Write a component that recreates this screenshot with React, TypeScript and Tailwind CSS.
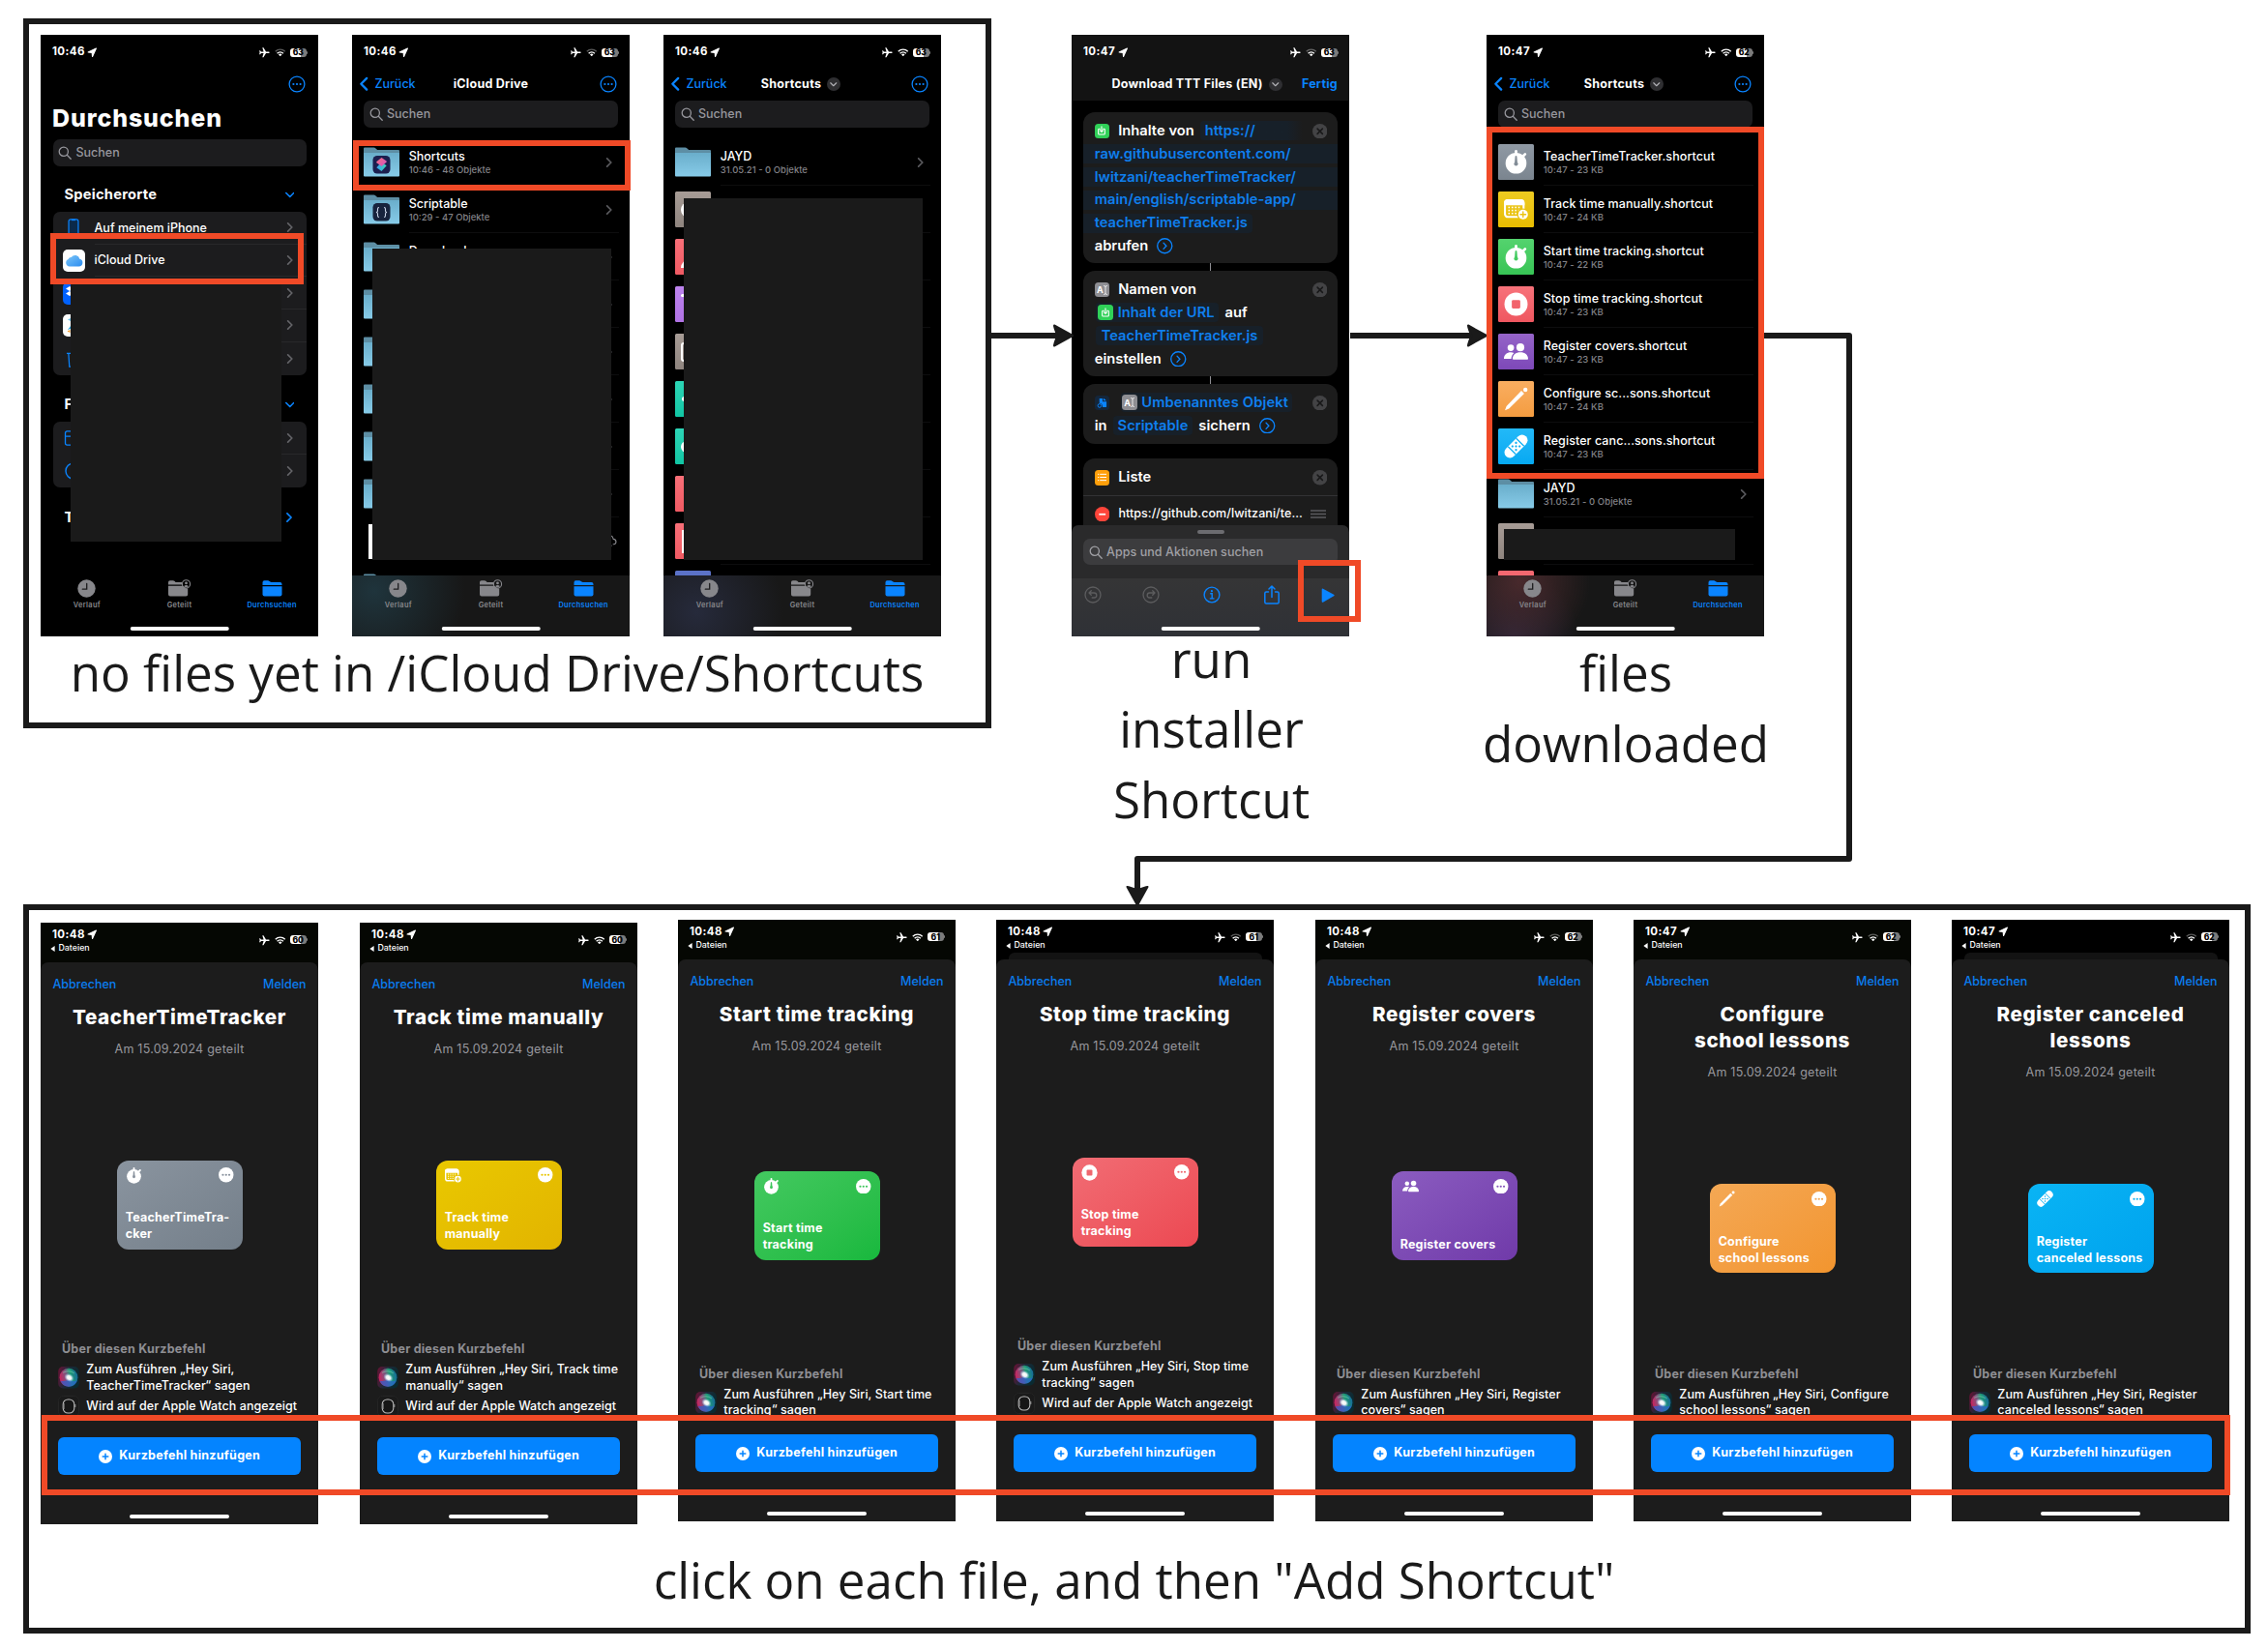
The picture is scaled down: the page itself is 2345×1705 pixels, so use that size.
import type { ReactNode } from "react";
import clsx from "clsx";

/* ---------- status bar ---------- */

function Wifi({ dim }: { dim: boolean }) {
  const outer = dim ? 0.35 : 1;
  return (
    <svg viewBox="0 0 22 16" className="h-[8.5px] w-[11.5px]" fill="none" stroke="#fff" strokeWidth="2.8">
      <path d="M1.5 6a13.4 13.4 0 0 1 19 0" opacity={outer} />
      <path d="M5 9.8a8.5 8.5 0 0 1 12 0" />
      <path d="M11 15.6 7.6 12.2a4.8 4.8 0 0 1 6.8 0z" fill="#fff" stroke="none" />
    </svg>
  );
}

function Battery({ level }: { level: number }) {
  return (
    <div className="flex items-center gap-[0.5px]">
      <div className="flex h-[9px] w-[16.5px] items-center justify-center rounded-[3px] bg-linear-to-r from-white from-63% to-[#7b7b7b] to-63% text-[8.5px] leading-none font-extrabold text-black">
        {level}
      </div>
      <div className="h-[3px] w-[1px] rounded-r-full bg-[#7b7b7b]" />
    </div>
  );
}

function LocationArrow() {
  return (
    <svg viewBox="0 0 24 24" className="h-[10.5px] w-[10.5px]" fill="#fff">
      <path d="M2.5 11.3 21.5 2.500l-8.800 19-.9-9.3z" stroke="#fff" strokeWidth="2.600" strokeLinejoin="round" />
    </svg>
  );
}

function StatusIcons({ level, dimWifi }: { level: number; dimWifi: boolean }) {
  return (
    <div className="flex items-center">
      <svg viewBox="0 0 24 24" className="mr-[5px] h-[12.5px] w-[12.5px] rotate-90" fill="#fff">
        <path d="M21.5 15.8v-2.3L13.5 8.600V3.400c0-.9-.7-1.800-1.500-1.800s-1.500.9-1.500 1.800v5.200l-8 4.900v2.300l8-2.500v5l-2.400 1.800v1.700L12 21l3.900.8v-1.700l-2.400-1.800v-5z" />
      </svg>
      <Wifi dim={dimWifi} />
      <div className="ml-[4.5px]">
        <Battery level={level} />
      </div>
    </div>
  );
}

function StatusBar({ time, level, dimWifi = false }: { time: string; level: number; dimWifi?: boolean }) {
  return (
    <div className="flex h-[35px] shrink-0 items-center justify-between pt-px pr-[11px] pl-[12px]">
      <div className="flex items-center gap-[2.5px] text-[11.5px] leading-none font-bold tracking-[0.035em]">
        {time}
        <LocationArrow />
      </div>
      <StatusIcons level={level} dimWifi={dimWifi} />
    </div>
  );
}

/* ---------- small shared icons ---------- */

function Chevron({ dir, className }: { dir: "right" | "left" | "down"; className: string }) {
  const d = { right: "M2 1l5 5-5 5", left: "M7 1 2 6l5 5", down: "M1 3l5 5 5-5" }[dir];
  return (
    <svg viewBox={dir === "down" ? "0 0 12 11" : "0 0 9 12"} className={className} fill="none" stroke="currentColor" strokeWidth="2" strokeLinecap="round" strokeLinejoin="round">
      <path d={d} />
    </svg>
  );
}

function MoreCircle() {
  return (
    <svg viewBox="0 0 18 18" className="h-[18px] w-[18px] text-[#0a84ff]">
      <circle cx="9" cy="9" r="7.9" fill="none" stroke="currentColor" strokeWidth="1.3" />
      <g fill="currentColor">
        <circle cx="5.4" cy="9" r="1.1" />
        <circle cx="9" cy="9" r="1.1" />
        <circle cx="12.6" cy="9" r="1.1" />
      </g>
    </svg>
  );
}

function TitleChevron() {
  return (
    <div className="flex h-[13.5px] w-[13.5px] items-center justify-center rounded-full bg-[#2f2f32] text-[#b0b0b5]">
      <Chevron dir="down" className="h-[6.5px] w-[7.5px]" />
    </div>
  );
}

function SearchField({ label, className }: { label: string; className: string }) {
  return (
    <div className={clsx("flex h-[27.3px] shrink-0 items-center gap-[4.5px] rounded-[7px] pl-[5.5px] text-[12.5px] leading-none font-medium", className)}>
      <svg viewBox="0 0 14 14" className="h-[14px] w-[14px]" fill="none" stroke="currentColor" strokeWidth="1.3" strokeLinecap="round">
        <circle cx="5.8" cy="5.8" r="4.6" />
        <path d="m9.3 9.3 3.9 3.9" />
      </svg>
      <span className="pt-px">{label}</span>
    </div>
  );
}

/* ---------- shortcut glyphs ---------- */

type Kind = "timer" | "calendar" | "stop" | "people" | "pencil" | "bandage";

function Glyph({ kind, cut, className }: { kind: Kind; cut: string; className: string }) {
  return (
    <svg viewBox="0 0 24 24" className={className} fill="#fff">
      {kind === "timer" && (
        <>
          <circle cx="12" cy="13.2" r="10.4" />
          <rect x="10.7" y="0" width="2.6" height="4" rx="1.2" />
          <path d="m19 6.2 2-2" stroke="#fff" strokeWidth="2.6" strokeLinecap="round" />
          <path d="M11.1 6.4q.9-1.2 1.8 0l.5 7h-2.8z" fill={cut} />
          <circle cx="12" cy="13.8" r="2" fill={cut} />
        </>
      )}
      {kind === "calendar" && (
        <>
          <rect x="1" y="3" width="18.5" height="16.5" rx="3" fill="none" stroke="#fff" strokeWidth="2" />
          <path d="M0 8V5.5Q0 2 3.5 2h13.5q3.5 0 3.5 3.5V8z" />
          <g fill="#fff">
            {[5, 8.3, 11.6, 14.9].map((x) =>
              [10, 13, 16].map((y) => <rect key={`${x}-${y}`} x={x - 0.7} y={y - 0.7} width="1.5" height="1.5" />),
            )}
          </g>
          <circle cx="19" cy="17" r="6" fill={cut} />
          <circle cx="19" cy="17" r="4.8" />
          <path d="M19 14.3v5.4M16.3 17h5.4" stroke={cut} strokeWidth="1.3" strokeLinecap="round" />
        </>
      )}
      {kind === "stop" && (
        <>
          <circle cx="12" cy="12" r="11.5" />
          <rect x="7.8" y="7.8" width="8.4" height="8.4" rx="1.3" fill={cut} />
        </>
      )}
      {kind === "people" && (
        <>
          <circle cx="6.8" cy="8.2" r="3.2" />
          <path d="M0 19.2c0-4 3-6.4 6.8-6.4 1.2 0 2.3.2 3.2.7-1.7 1.5-2.7 3.4-2.7 5.7z" />
          <circle cx="16.3" cy="7.8" r="3.9" />
          <path d="M8.600 19.200c0-3.800 3.200-6.400 7.700-6.400s7.700 2.600 7.700 6.400q0 .8-.8.8H9.400q-.8 0-.8-.8z" />
        </>
      )}
      {kind === "pencil" && (
        <>
          <path d="m17.3 3.9 2.8 2.8L5 21.5 1 23.2l1.500-4.100z" />
          <circle cx="21.3" cy="2.9" r="2.1" />
        </>
      )}
      {kind === "bandage" && (
        <g transform="rotate(-45 12 12)">
          <rect x="-2" y="6.5" width="28" height="11" rx="5.5" />
          <path d="M6.3 6.5v11M17.7 6.5v11" stroke={cut} strokeWidth="1.3" />
          <g fill={cut}>
            <circle cx="9.5" cy="9.5" r="1.1" />
            <circle cx="14.5" cy="9.5" r="1.1" />
            <circle cx="12" cy="12" r="1.1" />
            <circle cx="9.5" cy="14.5" r="1.1" />
            <circle cx="14.5" cy="14.5" r="1.1" />
          </g>
        </g>
      )}
    </svg>
  );
}

/* ---------- Files app ---------- */

function FolderIcon({ badge }: { badge?: "shortcuts" | "scriptable" }) {
  return (
    <svg viewBox="0 0 37 31" className="-mt-px h-[31px] w-[37px]">
      <defs>
        <linearGradient id="folderFront" x1="0" y1="0" x2="0" y2="1">
          <stop offset="0" stopColor="#6aaecb" />
          <stop offset="1" stopColor="#87cbe8" />
        </linearGradient>
        <linearGradient id="layersTop" x1="0" y1="0" x2="1" y2="1">
          <stop offset="0" stopColor="#f2717f" />
          <stop offset="1" stopColor="#d452c4" />
        </linearGradient>
        <linearGradient id="layersBottom" x1="0" y1="0" x2="1" y2="0">
          <stop offset="0" stopColor="#39a0ee" />
          <stop offset="1" stopColor="#3fd6b4" />
        </linearGradient>
      </defs>
      <path d="M0 1.5Q0 .5 1 .5h9.500q1 0 1.700.7l1.400 1.300q.5.500 1.400.500H36q1 0 1 1V12H0z" fill="#5d8ea4" />
      <path d="M0 6h37v23.500q0 1-1 1H1q-1 0-1-1z" fill="url(#folderFront)" />
      {badge && <rect x="9.5" y="9" width="18" height="18.5" rx="4.5" fill={badge === "shortcuts" ? "#1c1f4f" : "#17233d"} />}
      {badge === "shortcuts" && (
        <>
          <path d="m18.5 15.5 5.200 3.700-5.200 5.800-5.200-3.700z" fill="url(#layersBottom)" />
          <path d="m18.500 11 5 3.500q.7.600 0 1.300l-5 4.200-5-3.700q-.7-.6 0-1.300z" fill="url(#layersTop)" />
        </>
      )}
      {badge === "scriptable" && (
        <g fill="none" stroke="#c9d3e6" strokeWidth="1.1">
          <path d="M16 13.500q-1.500 0-1.500 1.500v2q0 1.300-1.500 1.500 1.500.2 1.500 1.500v2q0 1.500 1.500 1.500M21 13.500q1.500 0 1.500 1.500v2q0 1.300 1.500 1.500-1.500.2-1.500 1.500v2q0 1.500-1.500 1.500" />
        </g>
      )}
    </svg>
  );
}

function FileRow({ icon, name = "", meta = "", chevron = false }: { icon: ReactNode; name?: string; meta?: string; chevron?: boolean }) {
  return (
    <div className="flex h-[49px] shrink-0">
      <div className="flex h-[49px] w-[37px] items-center justify-center">{icon}</div>
      <div className="ml-[9.7px] flex grow border-b border-[#0d0d0e]">
        <div className="grow pt-[11px]">
          <div className="text-[12.5px] leading-[15px] font-medium whitespace-nowrap">{name}</div>
          <div className="text-[9.5px] leading-[13px] font-medium whitespace-nowrap text-[#828287]">{meta}</div>
        </div>
        {chevron && <Chevron dir="right" className="mt-[19.5px] mr-[6.5px] h-[10px] w-[7.5px] text-[#5a5a5e]" />}
      </div>
    </div>
  );
}

function Tile({ className, children }: { className: string; children?: ReactNode }) {
  return <div className={clsx("flex h-[37px] w-[37px] items-center justify-center overflow-hidden rounded-[1.5px]", className)}>{children}</div>;
}

function TabBar({ className }: { className: string }) {
  const label = "text-[7.4px] leading-[10px] font-semibold tracking-[0.045em]";
  return (
    <div className={clsx("relative grid h-[63.5px] shrink-0 grid-cols-3 justify-items-center pt-[4.5px]", className)}>
      <div className="flex flex-col items-center gap-[3px] text-[#87878b]">
        <svg viewBox="0 0 19 19" className="h-[19px] w-[19px]">
          <circle cx="9.5" cy="9.5" r="9.2" fill="currentColor" />
          <path d="M9.7 4.5v5.700H5.300" fill="none" stroke="#1c1c1e" strokeWidth="1.3" strokeLinecap="round" />
        </svg>
        <span className={label}>Verlauf</span>
      </div>
      <div className="flex flex-col items-center gap-[3px] text-[#87878b]">
        <svg viewBox="0 0 25 19" className="h-[19px] w-[25px]">
          <path d="M1 5.500V3q0-1.800 1.800-1.800h3q.9 0 1.600.6l.7.600q.5.500 1.300.500h5.600q.2 1.400.8 2.600z" fill="currentColor" />
          <path d="M1 6.800h15.200q1.800 2.700 5 2.800v6q0 2-2 2H3q-2 0-2-2z" fill="currentColor" />
          <circle cx="19.5" cy="4.9" r="4.1" fill="none" stroke="currentColor" strokeWidth="1.1" />
          <circle cx="19.5" cy="3.9" r="1.4" fill="currentColor" />
          <path d="M17 7.300q2.500-2.400 5 0-2.500 2-5 0z" fill="currentColor" />
        </svg>
        <span className={label}>Geteilt</span>
      </div>
      <div className="flex flex-col items-center gap-[3px] text-[#0a84ff]">
        <svg viewBox="0 0 21 19" className="h-[19px] w-[21px]">
          <path d="M.5 6V3.200q0-1.900 1.900-1.900H6q.9 0 1.600.6l.8.600q.5.400 1.300.400h8.800q2 0 2 2V6z" fill="currentColor" />
          <path d="M.5 7.300h20v8.200q0 2-2 2h-16q-2 0-2-2z" fill="currentColor" />
        </svg>
        <span className={label}>Durchsuchen</span>
      </div>
      <HomeIndicator className="absolute bottom-[6px] left-1/2 -translate-x-1/2" />
    </div>
  );
}

function HomeIndicator({ className }: { className: string }) {
  return <div className={clsx("h-[4px] w-[102.5px] rounded-full bg-white", className)} />;
}

function Phone({ className, children }: { className: string; children: ReactNode }) {
  return (
    <section className={clsx("absolute flex h-[622px] w-[287px] flex-col overflow-hidden bg-black font-['Inter',sans-serif] text-white", className)}>
      {children}
    </section>
  );
}

function FilesNav({ title, chevron }: { title: string; chevron: boolean }) {
  return (
    <div className="grid h-[31px] shrink-0 grid-cols-[1fr_auto_1fr] items-center pr-[13px] pl-[6.5px] text-[12.5px] leading-none">
      <div className="flex items-center gap-[6.5px] pt-px font-medium text-[#0a84ff]">
        <Chevron dir="left" className="h-[15.5px] w-[10.5px]" />
        Zurück
      </div>
      <div className={clsx("flex items-center gap-[6px] pt-px font-bold tracking-[0.02em]", chevron ? "pl-[3px]" : "pl-[6.5px]")}>
        {title}
        {chevron && <TitleChevron />}
      </div>
      <div className="justify-self-end">
        <MoreCircle />
      </div>
    </div>
  );
}

const grayField = "bg-[#1c1c1e] text-[#97979d]";

/* ---------- the "Durchsuchen" screen ---------- */

function GroupHeader({ label, dir, className }: { label: string; dir: "down" | "right"; className: string }) {
  return (
    <div className={clsx("flex h-[30px] items-center justify-between pr-[25px] pl-[24.5px] text-[14.7px] leading-none font-bold tracking-[0.015em]", className)}>
      {label}
      <Chevron dir={dir} className={clsx("text-[#0a84ff]", dir === "down" ? "h-[9px] w-[9.5px]" : "mr-[1.5px] h-[10px] w-[8px]")} />
    </div>
  );
}

function PlaceRow({ icon, label = "", last = false }: { icon: ReactNode; label?: string; last?: boolean }) {
  return (
    <div className="flex h-[33.7px] items-center">
      <div className="flex w-[43px] justify-center">{icon}</div>
      <div className={clsx("flex h-full grow items-center justify-between pr-[13.5px] text-[12.5px] leading-none font-medium", !last && "border-b border-[#28282a]")}>
        <span className="pt-px">{label}</span>
        <Chevron dir="right" className="h-[10px] w-[7.5px] text-[#636367]" />
      </div>
    </div>
  );
}

function BrowseScreen() {
  return (
    <Phone className="top-[36px] left-[42px]">
      <StatusBar time="10:46" level={63} dimWifi />
      <div className="flex h-[31px] items-center justify-end pr-[13px]">
        <MoreCircle />
      </div>
      <h1 className="mt-[5px] pl-[12px] text-[25px] leading-[30px] font-extrabold tracking-[0.035em]">Durchsuchen</h1>
      <SearchField label="Suchen" className={clsx("mx-[12.5px] mt-[7.3px]", grayField)} />
      <GroupHeader label="Speicherorte" dir="down" className="mt-[14.7px]" />
      <div className="mx-[12.5px] mt-[2.8px] rounded-[7px] bg-[#1c1c1e]">
        <PlaceRow
          label="Auf meinem iPhone"
          icon={
            <svg viewBox="0 0 12 20" className="h-[19px] w-[12px]">
              <rect x="0.8" y="0.8" width="10.4" height="18.4" rx="2" fill="#0b2a4a" stroke="#0a84ff" strokeWidth="1.3" />
              <path d="M4 1.500h4" stroke="#0a84ff" strokeWidth="1.5" />
            </svg>
          }
        />
        <PlaceRow
          label="iCloud Drive"
          icon={
            <div className="flex h-[23px] w-[23px] items-center justify-center rounded-[5px] bg-white">
              <svg viewBox="0 0 20 14" className="h-[13px] w-[19px]">
                <defs>
                  <linearGradient id="cloudBlue" x1="0" y1="0" x2="1" y2="1">
                    <stop offset="0" stopColor="#7cc6f8" />
                    <stop offset="1" stopColor="#2a8cf0" />
                  </linearGradient>
                </defs>
                <path d="M5 13.500A4.300 4.300 0 0 1 3.600 5.300 3.500 3.500 0 0 1 7 3.200 5.200 5.200 0 0 1 16.300 5.200a4.200 4.200 0 0 1-.9 8.300z" fill="url(#cloudBlue)" />
              </svg>
            </div>
          }
        />
        <PlaceRow
          icon={
            <div className="flex h-[23px] w-[23px] items-center rounded-[5px] bg-[#0061fe]">
              <svg viewBox="0 0 16 14" className="ml-[3.5px] h-[14px] w-[16px]" fill="#fff">
                <path d="m4 0 4 2.500L4 5 0 2.500zM4 5l4 2.500L4 10 0 7.500zM12 0l4 2.500L12 5 8 2.500zM12 5l4 2.500-4 2.500-4-2.500z" />
              </svg>
            </div>
          }
        />
        <PlaceRow
          icon={
            <div className="h-[23px] w-[23px] rounded-[5px] bg-white">
              <svg viewBox="0 0 23 23" className="h-[23px] w-[23px]">
                <path d="M8 4v8l-3 4 3-1z" fill="#2ea7e0" />
                <path d="M5 5.500 8 4v3z" fill="#6cc3ea" />
                <path d="m4.500 17.500 3-1.500v3z" fill="#f39a2d" />
              </svg>
            </div>
          }
        />
        <PlaceRow
          last
          icon={
            <svg viewBox="0 0 18 19" className="h-[18px] w-[17px]" fill="none" stroke="#0a84ff" strokeWidth="1.3">
              <path d="M1 3.500h16M3 3.500l1 14.500h10l1-14.500M6.500 3.500V1h5v2.500" />
            </svg>
          }
        />
      </div>
      <GroupHeader label="F" dir="down" className="mt-[16.3px]" />
      <div className="mx-[12.5px] mt-[2.5px] rounded-[7px] bg-[#1c1c1e]">
        <PlaceRow
          icon={
            <svg viewBox="0 0 20 17" className="h-[16px] w-[20px]" fill="none" stroke="#0a84ff" strokeWidth="1.4">
              <path d="M1 14V3q0-2 2-2h4l2 2h8q2 0 2 2v9q0 2-2 2H3q-2 0-2-2zM1 6.500h18" />
            </svg>
          }
        />
        <PlaceRow
          last
          icon={
            <svg viewBox="0 0 18 18" className="h-[18px] w-[18px]" fill="none" stroke="#0a84ff" strokeWidth="1.4">
              <circle cx="9" cy="9" r="8" />
            </svg>
          }
        />
      </div>
      <GroupHeader label="T" dir="right" className="mt-[16.3px]" />
      <div className="absolute top-[258px] left-[30.5px] h-[266px] w-[218.5px] bg-[#1a1a1a]" />
      <TabBar className="mt-auto" />
    </Phone>
  );
}

function DriveScreen() {
  return (
    <Phone className="top-[36px] left-[364px]">
      <StatusBar time="10:46" level={63} dimWifi />
      <FilesNav title="iCloud Drive" chevron={false} />
      <SearchField label="Suchen" className={clsx("mx-[12px] mt-[2.3px]", grayField)} />
      <div className="mt-[11.5px] flex min-h-0 grow flex-col overflow-hidden pr-[11px] pl-[12px]">
        <FileRow icon={<FolderIcon badge="shortcuts" />} name="Shortcuts" meta="10:46 - 48 Objekte" chevron />
        <FileRow icon={<FolderIcon badge="scriptable" />} name="Scriptable" meta="10:29 - 47 Objekte" chevron />
        <FileRow icon={<FolderIcon />} name="Downloads" chevron />
        {[0, 1, 2, 3, 4].map((i) => (
          <FileRow key={i} icon={<FolderIcon />} chevron />
        ))}
        <div className="flex h-[49px] shrink-0 items-center justify-between">
          <div className="ml-[5px] h-[36px] w-[27px] bg-white" />
          <svg viewBox="0 0 20 15" className="h-[14px] w-[20px]" fill="none" stroke="#8d8d92" strokeWidth="1.2">
            <path d="M6 10.500H4.500A3.500 3.500 0 0 1 4 3.700a5.500 5.500 0 0 1 10.500 1 3 3 0 0 1 1 5.800H14M10 6v8m-2.500-2.500L10 14l2.500-2.500" />
          </svg>
        </div>
        <FileRow icon={<FolderIcon />} />
      </div>
      <div className="absolute top-[221px] left-[21px] h-[321.7px] w-[246.7px] bg-[#1a1a1a]" />
      <TabBar className="bg-[#171717] bg-radial-[circle_at_8%_25%] from-[#1f343c] to-[#171717] to-35%" />
    </Phone>
  );
}

function EmptyShortcutsScreen() {
  return (
    <Phone className="top-[36px] left-[686px]">
      <StatusBar time="10:46" level={63} />
      <FilesNav title="Shortcuts" chevron />
      <SearchField label="Suchen" className={clsx("mx-[12px] mt-[2.3px]", grayField)} />
      <div className="mt-[11.7px] flex min-h-0 grow flex-col overflow-hidden pr-[11px] pl-[12px]">
        <FileRow icon={<FolderIcon />} name="JAYD" meta="31.05.21 - 0 Objekte" chevron />
        <FileRow icon={<Tile className="justify-start bg-linear-to-b from-[#a79c96] to-[#8f857f] pl-[6px]"><div className="h-[16px] w-[16px] rounded-full bg-white" /></Tile>} />
        <FileRow icon={<Tile className="justify-start bg-linear-to-b from-[#f86f78] to-[#f05a63] pl-[6px]"><div className="mt-[14px] h-[9px] w-[12px] rounded-tl-full bg-white" /></Tile>} />
        <FileRow icon={<Tile className="justify-start bg-linear-to-b from-[#bd84ee] to-[#b072e4] pl-[6px]"><div className="mb-[18px] h-[3px] w-[10px] rounded-full bg-white" /></Tile>} />
        <FileRow icon={<Tile className="justify-start bg-linear-to-b from-[#a79c96] to-[#8f857f] pl-[6px]"><div className="h-[20px] w-[16px] rounded-[3px] border-2 border-white" /></Tile>} />
        <FileRow icon={<Tile className="justify-start bg-linear-to-b from-[#2cd5b6] to-[#10c6a4] pl-[6.5px]"><div className="h-[5px] w-[10px] rounded-full bg-white" /></Tile>} />
        <FileRow icon={<Tile className="justify-start bg-linear-to-b from-[#2cd5b6] to-[#10c6a4] pl-[6px]"><div className="h-[12px] w-[12px] rounded-full bg-white" /></Tile>} />
        <FileRow icon={<Tile className="bg-linear-to-b from-[#f86f78] to-[#f05a63]" />} />
        <FileRow icon={<Tile className="justify-start bg-linear-to-b from-[#f86f78] to-[#f05a63] pl-[7px]"><div className="h-[24px] w-[12px] bg-white" /></Tile>} />
        <FileRow icon={<Tile className="bg-[#5b72c8]" />} />
      </div>
      <div className="absolute top-[169px] left-[20.5px] h-[373.7px] w-[247.5px] bg-[#1a1a1a]" />
      <TabBar className="bg-[#181818] bg-radial-[circle_at_12%_60%] from-[#262a3b] to-[#181818] to-35%" />
    </Phone>
  );
}

const files: { kind: Kind; name: string; size: string; tile: string; cut: string }[] = [
  { kind: "timer", name: "TeacherTimeTracker.shortcut", size: "23 KB", tile: "bg-linear-to-b from-[#8f99a4] to-[#7b858f]", cut: "#838d97" },
  { kind: "calendar", name: "Track time manually.shortcut", size: "24 KB", tile: "bg-linear-to-b from-[#eecb20] to-[#e8bd00]", cut: "#ebc20d" },
  { kind: "timer", name: "Start time tracking.shortcut", size: "22 KB", tile: "bg-linear-to-b from-[#54d36e] to-[#37c455]", cut: "#43cb60" },
  { kind: "stop", name: "Stop time tracking.shortcut", size: "23 KB", tile: "bg-linear-to-b from-[#f7727a] to-[#ef5760]", cut: "#f2646c" },
  { kind: "people", name: "Register covers.shortcut", size: "23 KB", tile: "bg-linear-to-b from-[#9564c8] to-[#7d48b8]", cut: "#8856c0" },
  { kind: "pencil", name: "Configure sc...sons.shortcut", size: "24 KB", tile: "bg-linear-to-b from-[#f9ae60] to-[#f49c40]", cut: "#f6a550" },
  { kind: "bandage", name: "Register canc...sons.shortcut", size: "23 KB", tile: "bg-linear-to-b from-[#22b9f8] to-[#05a9f2]", cut: "#14b1f5" },
];

function DownloadedScreen() {
  return (
    <Phone className="top-[36px] left-[1537px]">
      <StatusBar time="10:47" level={62} />
      <FilesNav title="Shortcuts" chevron />
      <SearchField label="Suchen" className={clsx("mx-[12px] mt-[2.3px]", grayField)} />
      <div className="mt-[11.5px] flex min-h-0 grow flex-col overflow-hidden pr-[11px] pl-[12px] tracking-[0.005em]">
        {files.map((f) => (
          <FileRow
            key={f.name}
            name={f.name}
            meta={`10:47 - ${f.size}`}
            icon={
              <Tile className={f.tile}>
                <Glyph kind={f.kind} cut={f.cut} className="h-[25px] w-[25px]" />
              </Tile>
            }
          />
        ))}
        <FileRow icon={<FolderIcon />} name="JAYD" meta="31.05.21 - 0 Objekte" chevron />
        <FileRow icon={<Tile className="bg-linear-to-b from-[#a79c96] to-[#8f857f]" />} />
        <FileRow icon={<Tile className="bg-[#f36870]" />} />
      </div>
      <div className="absolute top-[511px] left-[17.5px] h-[32px] w-[239.5px] bg-[#1a1a1a]" />
      <TabBar className="bg-[#171717] bg-[radial-gradient(circle_at_12%_10%,#48292c,transparent_28%),radial-gradient(circle_at_10%_100%,#2f2638,transparent_25%)]" />
    </Phone>
  );
}

/* ---------- shortcut editor ---------- */

function ActionIcon({ kind, className }: { kind: "url" | "rename" | "save" | "list"; className: string }) {
  return (
    <div
      className={clsx(
        "flex shrink-0 items-center justify-center rounded-[3.5px]",
        kind === "url" && "bg-[#30d158]",
        kind === "rename" && "bg-[#8e8e93]",
        kind === "save" && "bg-[#14263b]",
        kind === "list" && "bg-[#ff9f0a]",
        className,
      )}
    >
      {kind === "url" && (
        <svg viewBox="0 0 12 12" className="h-[10px] w-[10px]" fill="none" stroke="#fff" strokeWidth="1.3" strokeLinecap="round" strokeLinejoin="round">
          <path d="M4 3.800H3Q2 3.800 2 4.800v5q0 1 1 1h6q1 0 1-1v-5q0-1-1-1H8M6 1v6.500M4.200 5.900 6 7.700l1.800-1.800" />
        </svg>
      )}
      {kind === "rename" && (
        <>
          <span className="text-[9px] leading-none font-bold text-white">A</span>
          <svg viewBox="0 0 4 11" className="h-[10px] w-[4px]" fill="none" stroke="#fff" strokeWidth="0.9">
            <path d="M0 .5q2 0 2 1.500 0-1.500 2-1.500M2 2v7M0 10.500q2 0 2-1.500 0 1.500 2 1.500" />
          </svg>
        </>
      )}
      {kind === "save" && (
        <svg viewBox="0 0 12 12" className="h-[11px] w-[11px]" fill="#0a84ff">
          <path d="M3 1h3.500v3.500H11V10q0 1-1 1H6.500Q7 7 3 6.200z" />
          <path d="M7.500.8 11 3.600H7.500z" />
          <circle cx="3.2" cy="9.2" r="2" fill="none" stroke="#0a84ff" strokeWidth="1" />
        </svg>
      )}
      {kind === "list" && (
        <svg viewBox="0 0 12 10" className="h-[9px] w-[11px]" stroke="#fff" strokeWidth="1.1">
          <path d="M1 1.500h1.300M3.500 1.500H11M1 5h1.300M3.500 5H11M1 8.500h1.300M3.500 8.500H11" />
        </svg>
      )}
    </div>
  );
}

function DetailCircle({ className }: { className: string }) {
  return (
    <svg viewBox="0 0 16 16" className={clsx("h-[16.5px] w-[16.5px]", className)} fill="none" stroke="#0a84ff" strokeWidth="1.3" strokeLinecap="round">
      <circle cx="8" cy="8" r="7.3" />
      <path d="m6.800 5 2.800 3-2.800 3" />
    </svg>
  );
}

function CloseDot() {
  return (
    <svg viewBox="0 0 16 16" className="absolute right-[10.7px] h-[15.5px] w-[15.5px]">
      <circle cx="8" cy="8" r="8" fill="#434345" />
      <path d="m5.300 5.300 5.400 5.400m0-5.400-5.400 5.400" stroke="#19191a" strokeWidth="1.6" strokeLinecap="round" />
    </svg>
  );
}

function Line({ children }: { children: ReactNode }) {
  return <div className="relative flex h-[23.8px] items-center pl-[11.7px]">{children}</div>;
}

function UrlLine({ children, wide = true }: { children: ReactNode; wide?: boolean }) {
  return (
    <div className="flex h-[23.8px] items-center">
      <div className={clsx("flex h-[20px] items-center bg-[#172029] pl-[11.7px] text-[#0f7fee]", wide ? "w-full" : "rounded-r-[4px] pr-[5px]")}>{children}</div>
    </div>
  );
}

const actionCard = "mx-[12px] shrink-0 bg-[#1c1c1c] text-[14.7px] leading-none font-semibold tracking-[0.002em]";

function EditorScreen() {
  return (
    <Phone className="top-[36px] left-[1108px]">
      <div className="h-[68px] shrink-0 bg-[#131313]">
        <StatusBar time="10:47" level={63} dimWifi />
        <div className="flex h-[31.5px] items-center pt-px pl-[41.5px] text-[12.5px] leading-none font-bold tracking-[0.019em]">
          Download TTT Files (EN)
          <div className="ml-[6.5px]">
            <TitleChevron />
          </div>
          <span className="mr-[12px] ml-auto text-[#0a84ff]">Fertig</span>
        </div>
      </div>
      <div className={clsx("mt-[12px] h-[155.7px] rounded-[12px] pt-[7.5px]", actionCard)}>
        <Line>
          <ActionIcon kind="url" className="mr-[9px] h-[15.5px] w-[15.5px]" />
          Inhalte von
          <span className="ml-[6px] flex h-[20px] w-[106px] items-center rounded-l-[4px] bg-linear-to-r from-[#172029] from-85% to-[#1c1c1c] pl-[5px] text-[#0f7fee]">https://</span>
          <CloseDot />
        </Line>
        <UrlLine>raw.githubusercontent.com/</UrlLine>
        <UrlLine>lwitzani/teacherTimeTracker/</UrlLine>
        <UrlLine>main/english/scriptable-app/</UrlLine>
        <UrlLine wide={false}>teacherTimeTracker.js</UrlLine>
        <Line>
          abrufen
          <DetailCircle className="ml-[9px]" />
        </Line>
      </div>
      <div className="h-[8.3px] w-px shrink-0 self-center bg-[#8e8e93]" />
      <div className={clsx("h-[108.7px] rounded-[12px] pt-[7.7px]", actionCard)}>
        <Line>
          <ActionIcon kind="rename" className="mr-[9px] h-[15.5px] w-[15.5px]" />
          Namen von
          <CloseDot />
        </Line>
        <Line>
          <span className="ml-[1.5px] flex h-[20px] items-center rounded-[4px] bg-[#172029] pr-[4px] pl-[1.5px] text-[#0f7fee]">
            <ActionIcon kind="url" className="mr-[5px] h-[16px] w-[16px]" />
            Inhalt der URL
          </span>
          <span className="ml-[7px]">auf</span>
        </Line>
        <Line>
          <span className="ml-[1.5px] flex h-[20px] items-center rounded-[4px] bg-[#172029] px-[5.5px] text-[#0f7fee]">TeacherTimeTracker.js</span>
        </Line>
        <Line>
          einstellen
          <DetailCircle className="ml-[9.5px]" />
        </Line>
      </div>
      <div className="h-[8.3px] w-px shrink-0 self-center bg-[#8e8e93]" />
      <div className={clsx("h-[61.7px] rounded-[12px] pt-[7.5px]", actionCard)}>
        <Line>
          <ActionIcon kind="save" className="mr-[11.5px] h-[15.5px] w-[15.5px]" />
          <span className="flex h-[20px] items-center rounded-[4px] bg-[#172029] pr-[4px] pl-[1px] text-[#0f7fee]">
            <ActionIcon kind="rename" className="mr-[4.5px] h-[16px] w-[16px]" />
            <span className="tracking-[0.01em]">Umbenanntes Objekt</span>
          </span>
          <CloseDot />
        </Line>
        <Line>
          in
          <span className="mx-[6px] flex h-[20px] items-center rounded-[4px] bg-[#172029] px-[5px] text-[#0f7fee]">Scriptable</span>
          sichern
          <DetailCircle className="ml-[9.5px]" />
        </Line>
      </div>
      <div className={clsx("mt-[15.6px] h-[68.7px] rounded-t-[12px]", actionCard)}>
        <div className="relative flex h-[39px] items-center border-b border-[#333335] pt-px pl-[11.7px]">
          <ActionIcon kind="list" className="mr-[9px] h-[15.5px] w-[15.5px]" />
          Liste
          <CloseDot />
        </div>
        <div className="flex h-[36.5px] items-center pl-[11.7px] text-[12.5px] font-medium tracking-[0.005em]">
          <svg viewBox="0 0 16 16" className="mr-[9.2px] h-[15.5px] w-[15.5px]">
            <circle cx="8" cy="8" r="8" fill="#ff453a" />
            <path d="M4.500 8h7" stroke="#fff" strokeWidth="1.8" />
          </svg>
          https://github.com/lwitzani/te...
          <svg viewBox="0 0 16 9" className="mr-[12px] ml-auto h-[9px] w-[16px]" stroke="#5b5b5f" strokeWidth="1.3">
            <path d="M0 1h16M0 4.500h16M0 8h16" />
          </svg>
        </div>
      </div>
      <div className="relative flex grow flex-col rounded-t-[7px] bg-[#2a2a2b]">
        <div className="mt-[5px] h-[4px] w-[28px] shrink-0 self-center rounded-full bg-[#6c6c70]" />
        <SearchField label="Apps und Aktionen suchen" className="mx-[12px] mt-[5px] bg-[#3c3c3e] tracking-[0.005em] text-[#a0a0a5]" />
        <div className="mt-auto flex h-[60px] shrink-0 bg-linear-to-b from-[#353536] to-[#2f3136] pt-[8px]">
          <svg viewBox="0 0 18 18" className="ml-[13.3px] h-[18px] w-[18px]" fill="none" stroke="#5c5c5e" strokeWidth="1.3" strokeLinecap="round" strokeLinejoin="round">
            <circle cx="9" cy="9" r="8" />
            <path d="M7.300 4.800 5 7l2.300 2.300M5 7h5.300a2.500 2.500 0 0 1 0 5H8.200" />
          </svg>
          <svg viewBox="0 0 18 18" className="ml-[41.7px] h-[18px] w-[18px]" fill="none" stroke="#5c5c5e" strokeWidth="1.3" strokeLinecap="round" strokeLinejoin="round">
            <circle cx="9" cy="9" r="8" />
            <path d="M10.700 4.800 13 7l-2.300 2.300M13 7H7.700a2.500 2.500 0 0 0 0 5h2.100" />
          </svg>
          <svg viewBox="0 0 18 18" className="ml-[44.6px] h-[18px] w-[18px]" fill="none" stroke="#0a84ff" strokeWidth="1.4">
            <circle cx="9" cy="9" r="7.9" />
            <path d="M7.200 7.800h2v5M6.800 12.900h4.700" />
            <circle cx="8.9" cy="5.2" r="1.1" fill="#0a84ff" stroke="none" />
          </svg>
          <svg viewBox="0 0 18 20" className="-mt-[1px] ml-[44.4px] h-[20px] w-[18px]" fill="none" stroke="#0a84ff" strokeWidth="1.5" strokeLinecap="round" strokeLinejoin="round">
            <path d="M5.500 7H3.300q-1.500 0-1.500 1.500v9Q1.800 19 3.300 19h11.400q1.500 0 1.500-1.500v-9q0-1.500-1.500-1.500h-2.200M9 12.500V1.200M6 4l3-3 3 3" />
          </svg>
          <svg viewBox="0 0 14 16" className="mt-[1.5px] ml-[42px] h-[15.5px] w-[14px]" fill="#0a84ff">
            <path d="M.5 1.500Q.5.100 1.800.8l11.500 6.200q1.200.8 0 1.600L1.800 15.100q-1.300.7-1.300-.8z" />
          </svg>
        </div>
        <HomeIndicator className="absolute bottom-[6px] left-1/2 -translate-x-1/2" />
      </div>
    </Phone>
  );
}

/* ---------- shared shortcut previews ---------- */

function SiriIcon() {
  return (
    <svg viewBox="0 0 22 23" className="h-[22.5px] w-[22px] shrink-0">
      <defs>
        <linearGradient id="siriFrame" x1="0" y1="0" x2="1" y2="0.3">
          <stop offset="0" stopColor="#6d1034" />
          <stop offset="0.500" stopColor="#1d2a3a" />
          <stop offset="1" stopColor="#0a2a30" />
        </linearGradient>
        <linearGradient id="siriOrb" x1="0" y1="0.6" x2="1" y2="0.4">
          <stop offset="0" stopColor="#d01f5c" />
          <stop offset="0.400" stopColor="#7a5a80" />
          <stop offset="0.620" stopColor="#1f9d74" />
          <stop offset="1" stopColor="#176a9a" />
        </linearGradient>
        <radialGradient id="siriGlow">
          <stop offset="0" stopColor="#ffffff" />
          <stop offset="0.450" stopColor="#ffffff" stopOpacity="0.9" />
          <stop offset="1" stopColor="#9fc8ff" stopOpacity="0" />
        </radialGradient>
      </defs>
      <rect width="22" height="23" rx="5" fill="url(#siriFrame)" />
      <circle cx="11" cy="11.5" r="9.6" fill="url(#siriOrb)" />
      <path d="M2.500 15a9.200 9.200 0 0 0 17.500-.5Q15 17 11.500 13 8 16.500 2.500 15z" fill="#2a5fd0" opacity="0.7" />
      <ellipse cx="11.5" cy="11.7" rx="5.5" ry="4.2" transform="rotate(30 11.5 11.7)" fill="url(#siriGlow)" />
      <path d="M5 6.500q6-3.500 12 .5" fill="none" stroke="#8fe8c0" strokeWidth="0.7" opacity="0.7" />
    </svg>
  );
}

function WatchIcon() {
  return (
    <svg viewBox="0 0 22 22" className="h-[22px] w-[22px] shrink-0" fill="none">
      <rect x="0.5" y="0.5" width="21" height="21" rx="5" fill="#1a1a1a" stroke="#292929" strokeWidth="0.7" />
      <rect x="5.2" y="4" width="11.6" height="14" rx="5" fill="#161616" stroke="#b9b9b9" strokeWidth="1.1" />
      <path d="M6.500 8v6" stroke="#6f6f6f" strokeWidth="0.8" />
      <path d="M17.800 9v3" stroke="#bdbdbd" strokeWidth="0.8" />
    </svg>
  );
}

type Preview = {
  place: string;
  time: string;
  level: number;
  dimWifi?: boolean;
  stacked?: boolean;
  title: string[];
  card: string[];
  kind: Kind;
  tile: string;
  cut: string;
  siri: string[];
  watch?: boolean;
};

const previews: Preview[] = [
  {
    place: "top-[954px] left-[42px]",
    time: "10:48",
    level: 60,
    title: ["TeacherTimeTracker"],
    card: ["TeacherTimeTra-", "cker"],
    kind: "timer",
    tile: "bg-linear-to-br from-[#8a949f] to-[#747f8a]",
    cut: "#87919c",
    siri: ["Zum Ausführen „Hey Siri,", "TeacherTimeTracker“ sagen"],
    watch: true,
  },
  {
    place: "top-[954px] left-[372px]",
    time: "10:48",
    level: 60,
    title: ["Track time manually"],
    card: ["Track time", "manually"],
    kind: "calendar",
    tile: "bg-linear-to-br from-[#e9c800] to-[#e2b400]",
    cut: "#e8c500",
    siri: ["Zum Ausführen „Hey Siri, Track time", "manually“ sagen"],
    watch: true,
  },
  {
    place: "top-[951px] left-[701px]",
    time: "10:48",
    level: 61,
    title: ["Start time tracking"],
    card: ["Start time", "tracking"],
    kind: "timer",
    tile: "bg-linear-to-br from-[#43c960] to-[#17b83d]",
    cut: "#3cc65a",
    siri: ["Zum Ausführen „Hey Siri, Start time", "tracking“ sagen"],
  },
  {
    place: "top-[951px] left-[1030px]",
    time: "10:48",
    level: 61,
    dimWifi: true,
    stacked: true,
    title: ["Stop time tracking"],
    card: ["Stop time", "tracking"],
    kind: "stop",
    tile: "bg-linear-to-br from-[#f16c74] to-[#ec4852]",
    cut: "#ef666e",
    siri: ["Zum Ausführen „Hey Siri, Stop time", "tracking“ sagen"],
    watch: true,
  },
  {
    place: "top-[951px] left-[1360px]",
    time: "10:48",
    level: 62,
    dimWifi: true,
    title: ["Register covers"],
    card: ["Register covers"],
    kind: "people",
    tile: "bg-linear-to-br from-[#8b5cc0] to-[#703aa9]",
    cut: "#8656bc",
    siri: ["Zum Ausführen „Hey Siri, Register", "covers“ sagen"],
  },
  {
    place: "top-[951px] left-[1689px]",
    time: "10:47",
    level: 62,
    dimWifi: true,
    title: ["Configure", "school lessons"],
    card: ["Configure", "school lessons"],
    kind: "pencil",
    tile: "bg-linear-to-br from-[#f4a854] to-[#f2952e]",
    cut: "#f4a54f",
    siri: ["Zum Ausführen „Hey Siri, Configure", "school lessons“ sagen"],
  },
  {
    place: "top-[951px] left-[2018px]",
    time: "10:47",
    level: 62,
    dimWifi: true,
    stacked: true,
    title: ["Register canceled", "lessons"],
    card: ["Register", "canceled lessons"],
    kind: "bandage",
    tile: "bg-linear-to-br from-[#0ab4f4] to-[#00a2ee]",
    cut: "#08b0f3",
    siri: ["Zum Ausführen „Hey Siri, Register", "canceled lessons“ sagen"],
  },
];

function PreviewScreen({ p }: { p: Preview }) {
  return (
    <Phone className={clsx(p.place, !p.stacked && "bg-[#050703]!")}>
      <div className="flex h-[41.3px] shrink-0 justify-between pr-[11px] pl-[10px]">
        <div className="pt-[5.2px]">
          <div className="flex h-[15px] items-center gap-[2.5px] pl-[2px] text-[11.5px] leading-none font-bold tracking-[0.035em]">
            {p.time}
            <LocationArrow />
          </div>
          <div className="flex h-[13px] items-center gap-[3.5px] text-[8.8px] leading-none font-medium">
            <svg viewBox="0 0 5 7" className="h-[6px] w-[5px]" fill="#fff">
              <path d="M5 0v7L0 3.500z" />
            </svg>
            Dateien
          </div>
        </div>
        <div className="flex h-[35.5px] items-center">
          <StatusIcons level={p.level} dimWifi={!!p.dimWifi} />
        </div>
      </div>
      {p.stacked && <div className="mx-[12.5px] -mt-[7px] h-[7px] shrink-0 rounded-t-[6px] bg-[#131313]" />}
      <div className="flex min-h-0 grow flex-col rounded-t-[8px] bg-[#1c1c1c]">
        <div className="flex h-[44px] shrink-0 items-center justify-between px-[12.5px] pt-px text-[12.5px] leading-none font-medium text-[#0a7cf0]">
          <span>Abbrechen</span>
          <span>Melden</span>
        </div>
        <h2 className="text-center text-[20.6px] leading-[26.3px] font-extrabold tracking-[0.03em]">
          {p.title.map((t) => (
            <div key={t}>{t}</div>
          ))}
        </h2>
        <p className="mt-[11.8px] text-center text-[12.5px] leading-[16px] tracking-[0.02em] text-[#98989e]">Am 15.09.2024 geteilt</p>
        <div className="flex min-h-0 grow items-center justify-center pt-[10.5px] pl-[0.8px]">
          <div className={clsx("flex h-[92px] w-[130.5px] flex-col justify-between rounded-[12px] px-[9px] pt-[7px] pb-[7.5px]", p.tile)}>
            <div className="flex items-center justify-between">
              <Glyph kind={p.kind} cut={p.cut} className={clsx("h-[17px]", p.kind === "people" ? "w-[21px]" : "w-[17px]")} />
              <svg viewBox="0 0 16 16" className="mr-[0.5px] h-[15.5px] w-[15.5px]">
                <circle cx="8" cy="8" r="8" fill="#fff" />
                <g fill={p.cut}>
                  <circle cx="4.6" cy="8" r="1.15" />
                  <circle cx="8" cy="8" r="1.15" />
                  <circle cx="11.4" cy="8" r="1.15" />
                </g>
              </svg>
            </div>
            <div className="text-[12.5px] leading-[17px] font-bold tracking-[0.018em] whitespace-nowrap">
              {p.card.map((t) => (
                <div key={t}>{t}</div>
              ))}
            </div>
          </div>
        </div>
        <div className="shrink-0 pl-[18px]">
          <h3 className="pl-[4px] text-[12.5px] leading-[16px] font-bold tracking-[0.018em] text-[#8e8e93]">Über diesen Kurzbefehl</h3>
          <div className="mt-[4.7px] flex items-center gap-[7.3px]">
            <SiriIcon />
            <div className="text-[12.5px] leading-[16.5px] font-medium tracking-[0.006em] whitespace-nowrap">
              {p.siri.map((t) => (
                <div key={t}>{t}</div>
              ))}
            </div>
          </div>
          {p.watch && (
            <div className="mt-[1.5px] mb-[5px] flex items-center gap-[7.3px]">
              <WatchIcon />
              <div className="text-[12.5px] leading-[16px] font-medium tracking-[0.006em] whitespace-nowrap">Wird auf der Apple Watch angezeigt</div>
            </div>
          )}
        </div>
        <div className="flex h-[106.5px] shrink-0 flex-col items-center bg-[#1c1c1c] pt-[16.7px]">
          <div className="flex h-[39px] w-[251px] items-center justify-center gap-[7.5px] rounded-[6px] bg-[#0484ff] text-[12.5px] leading-none font-bold tracking-[0.022em]">
            <svg viewBox="0 0 14 14" className="h-[14px] w-[14px]">
              <circle cx="7" cy="7" r="7" fill="#fff" />
              <path d="M7 4.200v5.600M4.200 7h5.600" stroke="#0484ff" strokeWidth="1.5" strokeLinecap="round" />
            </svg>
            Kurzbefehl hinzufügen
          </div>
          <HomeIndicator className="mt-auto mb-[6px]" />
        </div>
      </div>
    </Phone>
  );
}

/* ---------- board ---------- */

function Highlight({ className }: { className: string }) {
  return <div className={clsx("absolute border-[#f04a27]", className)} />;
}

function Caption({ className, children }: { className: string; children: ReactNode }) {
  return (
    <p className={clsx("absolute text-center font-['Open_Sans',sans-serif] text-[51.1px] leading-[72.5px] whitespace-nowrap text-[#1a1a1a]", className)}>{children}</p>
  );
}

function Connectors() {
  return (
    <svg viewBox="0 0 2345 1705" className="pointer-events-none absolute inset-0 h-[1705px] w-[2345px]" fill="none" stroke="#1a1a1a" strokeWidth="6" strokeLinejoin="round">
      <path d="M1024 347h72M1396 347h128M1824 347h88v541H1176v34" />
      <g fill="#1a1a1a" strokeWidth="2">
        <path d="m1109 347-19 10.500q-.5-1 3.500-10.500-4-9.500-3.500-10.500z" />
        <path d="m1537 347-19 10.500q-.5-1 3.500-10.500-4-9.500-3.500-10.500z" />
        <path d="m1176 936-10.500-19q1-.5 10.500 3.500 9.500-4 10.500-3.500z" />
      </g>
    </svg>
  );
}

export default function App() {
  return (
    <main className="relative h-[1705px] w-[2345px] overflow-hidden bg-white">
      <div className="absolute top-[18.5px] left-[24px] h-[734px] w-[1001px] border-6 border-[#1a1a1a]" />
      <div className="absolute top-[935px] left-[24px] h-[754px] w-[2303px] border-6 border-[#1a1a1a]" />

      <BrowseScreen />
      <DriveScreen />
      <EmptyShortcutsScreen />
      <EditorScreen />
      <DownloadedScreen />
      {previews.map((p) => (
        <PreviewScreen key={p.title[0]} p={p} />
      ))}

      <Connectors />

      <Highlight className="top-[240.5px] left-[52px] h-[53.5px] w-[262px] border-6" />
      <Highlight className="top-[144.5px] left-[365px] h-[52.5px] w-[287px] border-6" />
      <Highlight className="top-[579px] left-[1342px] h-[64px] w-[65px] border-6" />
      <Highlight className="top-[131px] left-[1537px] h-[364px] w-[287px] border-6" />
      <Highlight className="top-[1463px] left-[43px] h-[83px] w-[2263px] border-6" />

      <Caption className="top-[659px] left-[24px] w-[980px]">no files yet in /iCloud Drive/Shortcuts</Caption>
      <Caption className="top-[644.5px] left-[1102px] w-[301px]">
        run
        <br />
        installer
        <br />
        Shortcut
      </Caption>
      <Caption className="top-[659px] left-[1530px] w-[302px]">
        files
        <br />
        downloaded
      </Caption>
      <Caption className="top-[1597px] left-[572.5px] w-[1200px]">click on each file, and then "Add Shortcut"</Caption>
    </main>
  );
}
